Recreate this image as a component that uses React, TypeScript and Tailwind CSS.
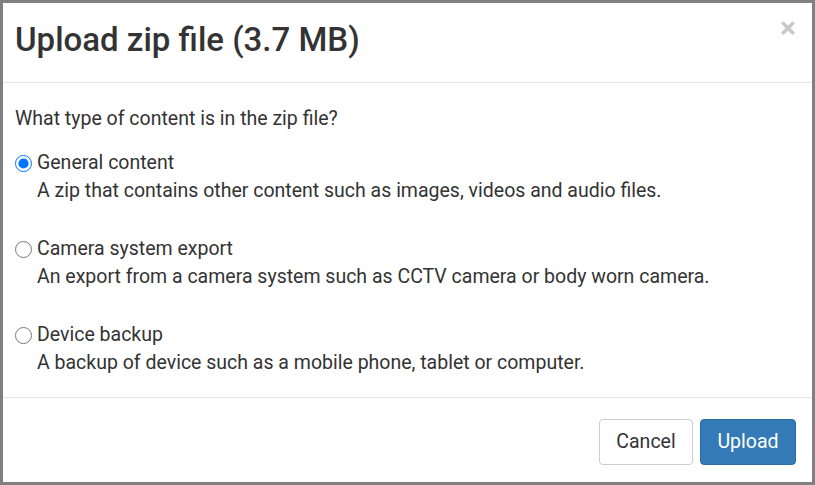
import React, { useState } from "react";

interface ContentOption {
    id: string;
    label: string;
    description: string;
}

const options: ContentOption[] = [
    {
        id: "general",
        label: "General content",
        description: "A zip that contains other content such as images, videos and audio files.",
    },
    {
        id: "camera",
        label: "Camera system export",
        description: "An export from a camera system such as CCTV camera or body worn camera.",
    },
    {
        id: "device",
        label: "Device backup",
        description: "A backup of device such as a mobile phone, tablet or computer.",
    },
];

export default function App() {
    const [selected, setSelected] = useState("general");

    return (
        <div
            className="w-[815px] h-[485px] bg-[#808080] pt-[3px] pl-[3px] pr-[3px] pb-[3px] text-[#333]"
            style={{ fontFamily: "Roboto, 'Liberation Sans', sans-serif" }}
        >
            <div className="flex flex-col h-[479px] bg-white">
                {/* Header */}
                <div className="flex items-start justify-between h-[80px] pl-[12px] pr-[16px] border-b border-[#e5e5e5]">
                    <h2 className="mt-[16px] text-[33px] leading-[42px] font-medium">Upload zip file (3.7 MB)</h2>
                    <button className="mt-[10px] text-[30px] leading-[30px] font-bold text-[#c8c8c8]">×</button>
                </div>

                {/* Body */}
                <div className="flex-1 pl-[12px] pr-[15px] pt-[22px] border-b border-[#e5e5e5] text-[19.5px] leading-[28px]">
                    <p className="mb-[16px]">What type of content is in the zip file?</p>
                    <div className="flex flex-col gap-[30px]">
                        {options.map((option) => (
                            <label key={option.id} className="block cursor-pointer">
                                <span className="flex items-center gap-[5px]">
                                    <input
                                        type="radio"
                                        name="contentType"
                                        checked={selected === option.id}
                                        onChange={() => setSelected(option.id)}
                                        className="m-0 w-[17px] h-[17px] accent-[#0075ff]"
                                    />
                                    <span>{option.label}</span>
                                </span>
                                <span className="block pl-[22px]">{option.description}</span>
                            </label>
                        ))}
                    </div>
                </div>

                {/* Footer */}
                <div className="flex justify-end gap-[7px] h-[84px] pt-[21px] pr-[16px] text-[19.5px]">
                    <button className="w-[94px] h-[46px] rounded-[4px] border border-[#ccc] bg-white text-[#333]">
                        Cancel
                    </button>
                    <button className="w-[96px] h-[46px] rounded-[4px] border border-[#2e6da4] bg-[#337ab7] text-white">
                        Upload
                    </button>
                </div>
            </div>
        </div>
    );
}
